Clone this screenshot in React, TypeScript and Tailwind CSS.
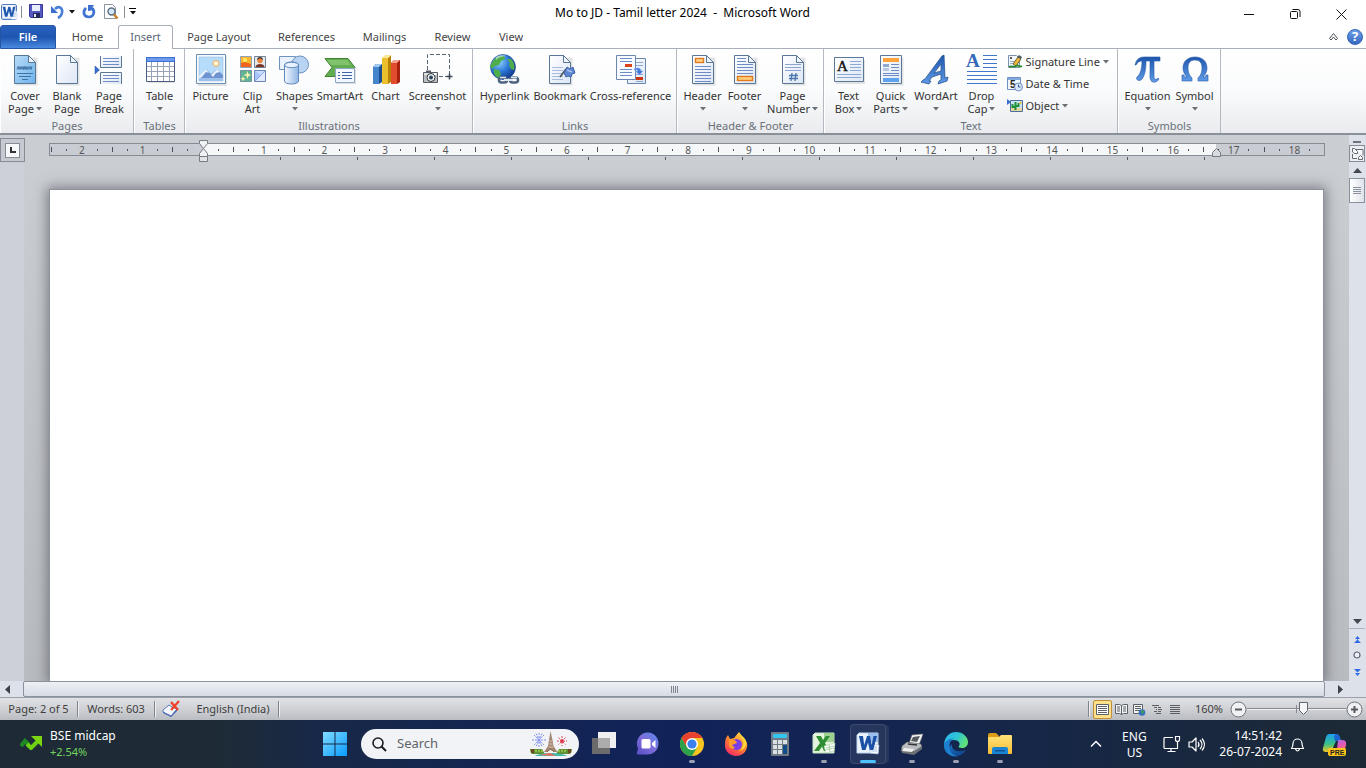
import React from 'react';

type Kids = { children?: React.ReactNode };

function Icon({ children, size = 32 }: Kids & { size?: number }) {
  return (
    <svg width={size} height={size} viewBox={`0 0 ${size} ${size}`} className="block shrink-0 overflow-visible" aria-hidden="true">
      {children}
    </svg>
  );
}

function Defs() {
  return (
    <svg width="0" height="0" className="absolute" aria-hidden="true">
      <defs>
        <linearGradient id="paper" x1="0" y1="0" x2="1" y2="1">
          <stop offset="0" stopColor="#ffffff" />
          <stop offset="1" stopColor="#dce6f5" />
        </linearGradient>
        <linearGradient id="cover" x1="0" y1="0" x2="1" y2="1">
          <stop offset="0" stopColor="#b9dcf7" />
          <stop offset="1" stopColor="#6db3ec" />
        </linearGradient>
        <linearGradient id="blueGlyph" x1="0" y1="0" x2="0" y2="1">
          <stop offset="0" stopColor="#1d55ae" />
          <stop offset="1" stopColor="#5f9be6" />
        </linearGradient>
        <linearGradient id="shape" x1="0" y1="0" x2="1" y2="0">
          <stop offset="0" stopColor="#f4f9ff" />
          <stop offset="1" stopColor="#8fb5e6" />
        </linearGradient>
        <radialGradient id="globe" cx="0.35" cy="0.3" r="0.8">
          <stop offset="0" stopColor="#8fd0ff" />
          <stop offset="0.5" stopColor="#2b77d6" />
          <stop offset="1" stopColor="#0c2f80" />
        </radialGradient>
        <linearGradient id="winlogo" x1="0" y1="0" x2="1" y2="1">
          <stop offset="0" stopColor="#82dcff" />
          <stop offset="1" stopColor="#079bff" />
        </linearGradient>
        <linearGradient id="chat" x1="0" y1="1" x2="1" y2="0">
          <stop offset="0" stopColor="#5a4fc9" />
          <stop offset="0.5" stopColor="#7d6bd8" />
          <stop offset="1" stopColor="#5a8df0" />
        </linearGradient>
        <linearGradient id="edge" x1="0" y1="0" x2="1" y2="0.4">
          <stop offset="0" stopColor="#2bb5ee" />
          <stop offset="0.55" stopColor="#2dc3d8" />
          <stop offset="1" stopColor="#5fe07a" />
        </linearGradient>
        <linearGradient id="edgeLow" x1="0" y1="0" x2="1" y2="1">
          <stop offset="0" stopColor="#1a6fc0" />
          <stop offset="1" stopColor="#0d3f86" />
        </linearGradient>
        <linearGradient id="fox" x1="0.8" y1="0" x2="0.2" y2="1">
          <stop offset="0" stopColor="#ffe14a" />
          <stop offset="0.45" stopColor="#ff8a2a" />
          <stop offset="1" stopColor="#f5236a" />
        </linearGradient>
        <linearGradient id="folder" x1="0" y1="0" x2="0" y2="1">
          <stop offset="0" stopColor="#ffe27a" />
          <stop offset="1" stopColor="#f7bd35" />
        </linearGradient>
        <linearGradient id="copA" x1="0" y1="0" x2="0" y2="1">
          <stop offset="0" stopColor="#1aa0f0" />
          <stop offset="0.55" stopColor="#39c08a" />
          <stop offset="1" stopColor="#f0c61e" />
        </linearGradient>
        <linearGradient id="copB" x1="0" y1="0" x2="0.4" y2="1">
          <stop offset="0" stopColor="#9a6cf0" />
          <stop offset="0.6" stopColor="#e858b0" />
          <stop offset="1" stopColor="#ff8a5c" />
        </linearGradient>
      </defs>
    </svg>
  );
}

function Lines({ x, w, ys, c = '#6f8cc4' }: { x: number; w: number; ys: number[]; c?: string }) {
  return (
    <>
      {ys.map((y) => (
        <rect key={y} x={x} y={y} width={w} height="1" fill={c} />
      ))}
    </>
  );
}

function Sheet({ children, fill = 'url(#paper)', fold = true }: Kids & { fill?: string; fold?: boolean }) {
  return (
    <Icon>
      <path d="M6.5 3.5h22v28h-22z" fill="#000" opacity=".1" />
      {fold ? (
        <>
          <path d="M5.5 1.5h14l7 7v21h-21z" fill={fill} stroke="#5b7796" />
          <path d="M19.5 1.5v7h7z" fill="#edf4fc" stroke="#5b7796" />
        </>
      ) : (
        <path d="M5.5 1.5h21v28h-21z" fill={fill} stroke="#5b7796" />
      )}
      {children}
    </Icon>
  );
}

const CoverIcon = () => (
  <Sheet fill="url(#cover)">
    <path d="M8 15.500l1-3 1 3 1-3 1 3 1-3 1 3 1-3v3l1-3 1 3 1-3v3l2-3v3l2-3v3l1-3" fill="none" stroke="#3a6c9f" strokeWidth=".9" />
    <Lines x={8} w={16} ys={[19]} c="#3f74a8" />
    <Lines x={10} w={12} ys={[22]} c="#3f74a8" />
    <Lines x={13} w={6} ys={[25]} c="#3f74a8" />
  </Sheet>
);
const BlankIcon = () => <Sheet />;
const BreakIcon = () => (
  <Icon>
    <path d="M7.500 2v11.500h21V2" fill="url(#paper)" stroke="#5b7796" />
    <path d="M28.500 30V18.500h-21V30" fill="url(#paper)" stroke="#5b7796" />
    <Lines x={10} w={16} ys={[4, 7, 10, 21, 24, 27]} />
    <path d="M2 12v8l4.500-4z" fill="#3a6fd0" stroke="#24509f" strokeWidth=".5" />
  </Icon>
);
const TableIcon = () => (
  <Icon>
    <path d="M4 5h27v24H4z" fill="#000" opacity=".1" />
    <path d="M2.500 3.500h28v24h-28z" fill="#fff" stroke="#4c5f80" />
    <path d="M2 3h29v5H2z" fill="#3f6fd0" />
    <path d="M3 4h27v3H3z" fill="#6d9bee" />
    <path d="M7.500 8v19M13.500 8v19M19.500 8v19M25.500 8v19M3 12.500h27M3 17.500h27M3 22.500h27" stroke="#98a3b5" />
  </Icon>
);
const PictureIcon = () => (
  <Icon>
    <path d="M3 2h29v30H3z" fill="#000" opacity=".1" />
    <path d="M1.500.500h29v29h-29z" fill="#f7fbff" stroke="#6c8fb2" />
    <path d="M4 3h24v24H4z" fill="#b5dcfa" stroke="#9cc0e0" strokeWidth=".6" />
    <circle cx="21" cy="9.500" r="3" fill="#fff4d0" stroke="#f0a860" />
    <path d="M4 25v-2l7-8 5 5 6-5 6 6v4z" fill="#6f93d0" />
    <path d="M4 25v-3l7-7 3 4-3-1-4 5zM16 21l6-6 3 3-4 1-3 4z" fill="#e6f0fb" />
    <path d="M4 24h24v3H4z" fill="#9cc2ec" />
  </Icon>
);
const ClipIcon = () => (
  <Icon>
    <path d="M3.500 2.500h11v11h-11z" fill="#ffb52e" stroke="#8fa3b8" />
    <path d="M4 9l4-1 6 2v3H4z" fill="#f0641e" />
    <circle cx="8" cy="6" r="2" fill="#fff06a" />
    <path d="M17.500 2.500h11v11h-11z" fill="#e5e9ee" stroke="#6f8296" />
    <circle cx="23" cy="6.500" r="2.700" fill="#e8853a" />
    <path d="M20 6c0-4 6-4 6 0l-3-2z" fill="#3a2620" />
    <path d="M18.500 13c0-4 9-4 9 0z" fill="#7a3428" />
    <path d="M3.500 16.500h11v11h-11z" fill="#5fb493" stroke="#7393a0" />
    <path d="M10.500 17l1 3 3 1-3 1-1 3-1-3-3-1 3-1zM6 22l.7 2 2 .7-2 .7-.7 2-.7-2-2-.7 2-.7z" fill="#fff5b0" />
    <path d="M17.500 16.500h11v11h-11z" fill="#c8dcff" stroke="#6f86b0" />
    <path d="M18 17l7 5-7 5z" fill="#a9c4f8" />
    <path d="M28 17v10l-9-0z" fill="#e0ebff" />
    <path d="M28 17l-7 7-3 3" stroke="#7b9be4" strokeWidth=".8" fill="none" />
  </Icon>
);
const ShapesIcon = () => (
  <Icon>
    <path d="M.500 2.500h16v13h-16z" fill="#eaf3fd" stroke="#6e93be" />
    <circle cx="21" cy="10.500" r="8.500" fill="#b9d4f3" stroke="#6e93be" />
    <path d="M5.500 11c0-4 14-4 14 0v16c0 4-14 4-14 0z" fill="url(#shape)" stroke="#5f88bb" />
    <ellipse cx="12.500" cy="11" rx="7" ry="2.700" fill="#e9f3ff" stroke="#5f88bb" />
  </Icon>
);
const SmartIcon = () => (
  <Icon>
    <path d="M1 4.500h23l7 9-7 9H1l7-9z" fill="#62ad50" stroke="#3f8232" />
    <path d="M3 6h20l4 5H7z" fill="#8fcb78" opacity=".7" />
    <path d="M12 15h20v15H12z" fill="#000" opacity=".12" />
    <path d="M11.500 14.500h19v14h-19z" fill="#f3f8ff" stroke="#8fa6c6" />
    <Lines x={14} w={2} ys={[18, 21, 24]} c="#3f66a6" />
    <Lines x={18} w={10} ys={[18, 21, 24]} c="#3f66a6" />
  </Icon>
);
const ChartIcon = () => (
  <Icon>
    <path d="M3 13l3-3h6v18l-3 2H3z" fill="#1d4f8e" />
    <path d="M3 13h6v17H3z" fill="#4585cc" />
    <path d="M3 13l3-3h6l-3 3z" fill="#9fc8f0" />
    <path d="M21 9l3-3h6v22l-3 2h-6z" fill="#a8200e" />
    <path d="M21 9h6v21h-6z" fill="#e04c2c" />
    <path d="M21 9l3-3h6l-3 3z" fill="#f6a08e" />
    <path d="M18 4l3-3v27l-3 2z" fill="#b98204" />
    <path d="M12 4h6v26h-6z" fill="#ecc02c" />
    <path d="M12 4l3-3h6l-3 3z" fill="#fbe795" />
  </Icon>
);
const ShotIcon = () => (
  <Icon>
    <path d="M5.500 16V.500h22V20M17 22.500h8" fill="none" stroke="#5c6775" strokeDasharray="4 2" />
    <path d="M27.500 19.500v6M24.500 22.500h6" stroke="#3b4654" strokeWidth="1.500" />
    <path d="M1.500 18.500h14v10h-14z" fill="#b9bec3" stroke="#565c62" />
    <path d="M2 19h13v2H2z" fill="#e1e4e7" />
    <path d="M4 16.500h5v2H4z" fill="#565c62" />
    <circle cx="9" cy="23.500" r="4" fill="#f2f5f7" stroke="#333" />
    <circle cx="9" cy="23.500" r="2" fill="#27455e" />
    <rect x="12" y="19" width="2" height="2" fill="#fff" />
  </Icon>
);
const LinkIcon = () => (
  <Icon>
    <circle cx="14" cy="13" r="12.500" fill="url(#globe)" stroke="#17428c" strokeWidth=".6" />
    <path d="M4 7c3-4 7-6 11-5l1 3-4 2-2 4-4 1-3 3-2-3zM18 5h4c3 3 4 7 3 11l-3-1-2-4 1-2zM5 15l5 1 2 4-2 4c-4-1-6-5-5-9z" fill="#4fae4a" />
    <path d="M7 3c4-2 8-2 11-1-4 0-8 1-11 4z" fill="#fff" opacity=".5" />
    <rect x="10" y="23.500" width="8" height="5" rx="2.500" fill="none" stroke="#4f6480" strokeWidth="2.600" />
    <rect x="21" y="23.500" width="8" height="5" rx="2.500" fill="none" stroke="#4f6480" strokeWidth="2.600" />
    <path d="M15 26h9" stroke="#dce7f2" strokeWidth="2" />
    <path d="M11 23.500h6M22 23.500h6" stroke="#d5e2ee" strokeWidth="1.300" />
  </Icon>
);
const BookmarkIcon = () => (
  <Sheet>
    <Lines x={8} w={11} ys={[13, 16, 19, 22, 25]} c="#a8bcdc" />
    <path d="M16 23l6-8" stroke="#4a4f5c" strokeWidth="1.500" />
    <path d="M23 13l3 2 3-2 2 6-3 1-1 3-3-1-2 1-2-4z" fill="#5f86d0" stroke="#3d62a8" />
    <path d="M23 16l5 2" stroke="#a9c2f0" strokeWidth="1.500" />
  </Sheet>
);
const CrossIcon = () => (
  <Icon>
    <path d="M12.500 4.500h18v25h-18z" fill="url(#paper)" stroke="#6b87b0" />
    <rect x="21" y="23" width="7" height="3" fill="#cc3514" />
    <Lines x={21} w={7} ys={[8, 11, 20, 27]} c="#8ca7d4" />
    <path d="M1.500 1.500h19v24h-19z" fill="#f7faff" stroke="#6b87b0" />
    <Lines x={5} w={12} ys={[4, 7, 15, 18, 21]} />
    <rect x="10" y="10" width="7" height="3" fill="#dc4217" />
    <path d="M19 15c4-2 7-1 7 2h2l-3.500 4-4-4H23c-1-2-2-1-4-1z" fill="#4377d8" stroke="#8bb0f4" strokeWidth=".6" />
  </Icon>
);
const HeaderIcon = () => (
  <Sheet>
    <rect x="8.500" y="4.500" width="8" height="4" fill="#ffd58a" stroke="#e07a1c" strokeWidth="1.400" />
    <Lines x={8} w={16} ys={[12, 15, 18, 21, 24, 27]} />
  </Sheet>
);
const FooterIcon = () => (
  <Sheet>
    <Lines x={8} w={9} ys={[4, 7]} />
    <Lines x={8} w={16} ys={[10, 13, 16, 19]} />
    <rect x="8.500" y="22.500" width="15" height="4" fill="#ffcf80" stroke="#e07a1c" strokeWidth="1.400" />
  </Sheet>
);
const NumberIcon = () => (
  <Sheet>
    <Lines x={8} w={16} ys={[10, 13, 16]} c="#8ba4d2" />
    <path d="M15 19l-1 8M19 19l-1 8M12 21.500h9M12 24.500h9" stroke="#4d75ad" strokeWidth="1.300" />
  </Sheet>
);
const TextBoxIcon = () => (
  <Icon>
    <path d="M3 6h29v24H3z" fill="#000" opacity=".1" />
    <path d="M1.500 3.500h29v24h-29z" fill="url(#paper)" stroke="#5b7796" />
    <text x="4" y="17" fontFamily="Liberation Serif, serif" fontSize="15" fill="#111" stroke="#111" strokeWidth=".4">A</text>
    <Lines x={17} w={11} ys={[7, 10, 13, 16]} c="#8ea8d6" />
    <Lines x={4} w={24} ys={[20, 23]} c="#8ea8d6" />
  </Icon>
);
const QuickIcon = () => (
  <Sheet fold={false}>
    <rect x="8" y="4" width="16" height="4" fill="#ffa43a" />
    <rect x="8" y="10" width="6" height="3" fill="#8fa9d0" />
    <rect x="8" y="14" width="6" height="3" fill="#b9c9e4" />
    <Lines x={16} w={8} ys={[10, 13, 16]} />
    <Lines x={8} w={16} ys={[19, 21]} />
    <rect x="8" y="24" width="16" height="4" fill="#5fa3ee" />
  </Sheet>
);
const WordArtIcon = () => (
  <Icon>
    <path d="M24 1l1 23 3-1-1 4-9 3 1-3 2-1v-6l-9 3-3 4 2 0-2 3-8-2 2-2 2-1L22 2zM21 10l-7 9 7-2z" fillRule="evenodd" fill="url(#blueGlyph)" stroke="#2a568f" strokeWidth=".8" strokeLinejoin="round" />
  </Icon>
);
const DropCapIcon = () => (
  <Icon>
    <text x="0" y="13" fontFamily="Liberation Serif, serif" fontWeight="bold" fontSize="19" fill="#336ab8">A</text>
    <Lines x={17} w={14} ys={[1, 5, 9, 13]} c="#3f78cc" />
    <Lines x={1} w={30} ys={[17, 21, 25, 29]} c="#3f78cc" />
  </Icon>
);
const PiIcon = () => (
  <Icon>
    <path d="M3 11C4 6 7 3 12 3h16v4h-6v15c0 4 2 4 4 2l1 1c-3 5-9 4-9-2V7h-4c0 8-1 14-4 18-2 3-7 1-5-2 3-2 5-8 5-16-3 0-4 1-6 4z" fill="url(#blueGlyph)" stroke="#2a5ca8" strokeWidth=".6" />
  </Icon>
);
const OmegaIcon = () => (
  <Icon>
    <path d="M3 27v-6h2c0 2 1 2 3 2C5 20 4 17 4 14 4 7 9 3 16 3s12 4 12 11c0 3-1 6-4 9 2 0 3 0 3-2h2v6H19v-3c3-3 4-6 4-10 0-5-2-8-7-8s-7 3-7 8c0 4 1 7 4 10v3z" fill="url(#blueGlyph)" stroke="#2a5ca8" strokeWidth=".6" />
  </Icon>
);

const SignIcon = () => (
  <Icon size={16}>
    <path d="M1.500 1.500h8l3 3v9h-11z" fill="#f2f6fc" stroke="#7d92ad" />
    <path d="M3 5l2-2M3 3l2 2" stroke="#333" strokeWidth=".8" />
    <Lines x={3} w={6} ys={[7, 9]} c="#9fb3cf" />
    <path d="M6 10l5-7 3 2-5 7z" fill="#e9b63e" stroke="#5c4a1c" strokeWidth=".8" />
    <path d="M10 3l2-2 3 2-1 2z" fill="#555b66" />
    <path d="M2 13c3-2 4 1 7-1s3 2 6 0" fill="none" stroke="#2a8a30" strokeWidth="1.800" />
  </Icon>
);
const DateIcon = () => (
  <Icon size={16}>
    <path d="M.500 1.500h13v12H.500z" fill="#f1f6ff" stroke="#6f8fc2" />
    <path d="M1 2h12v2H1z" fill="#84abdf" />
    <text x="3" y="12" fontFamily="Liberation Sans, sans-serif" fontWeight="bold" fontSize="10" fill="#222">5</text>
    <circle cx="11.500" cy="11" r="4" fill="#d9e8fb" stroke="#6f8fc2" />
    <path d="M11.500 8.500V11h2" fill="none" stroke="#37578c" />
  </Icon>
);
const ObjectIcon = () => (
  <Icon size={16}>
    <path d="M3.500 2.500h12v11h-12z" fill="#c9e4f7" stroke="#4b6f9a" />
    <path d="M4 10h11v3H4z" fill="#e5d59b" />
    <path d="M8.500 12V4M5.500 6v3h3M11.500 5v3h-3" fill="none" stroke="#1e9038" strokeWidth="2" />
    <circle cx="13.500" cy="5" r="1.200" fill="#f0bb44" />
    <path d="M0 1v6l4-3z" fill="#3a6fd0" />
  </Icon>
);

function Caret({ dark = false }: { dark?: boolean }) {
  return (
    <svg width="6" height="4" viewBox="0 0 6 4" className="inline-block shrink-0" aria-hidden="true">
      <path d="M0 0h6L3 3.500z" fill={dark ? '#111' : '#6b6f76'} />
    </svg>
  );
}

type Cmd = { a: string; b?: string; caret?: boolean; icon: React.ReactNode; w: string };

function BigButton({ a, b, caret, icon, w }: Cmd) {
  return (
    <button type="button" className={`flex shrink-0 flex-col items-center whitespace-nowrap rounded-sm hover:bg-[#fdeeb3] ${w}`}>
      {icon}
      <span className="mt-[3px] block leading-[13px]">{a}</span>
      <span className={`flex h-[13px] items-center leading-[13px] ${b ? 'gap-0.5' : ''}`}>
        {b}
        {caret && <Caret />}
      </span>
    </button>
  );
}

function Group({ label, w, children }: Kids & { label: string; w: string }) {
  return (
    <section aria-label={label} className={`flex shrink-0 flex-col border-r border-[#b4b9c1] pt-[5px] shadow-[inset_1px_0_0_#fff] ${w}`}>
      <div className="flex flex-1 justify-center pl-px">{children}</div>
      <h2 className="pb-px pl-px text-center leading-[13px] text-[#6a707a]">{label}</h2>
    </section>
  );
}

const N = 'w-[42px]';
const small = 'flex h-4 items-center gap-[3px] whitespace-nowrap';

function Ribbon() {
  return (
    <div className="flex h-[86px] shrink-0 overflow-hidden border-b-2 border-[#8b9098] bg-linear-to-b from-white via-[#fafbfc] to-[#e9ebee] text-[#333]">
      <Group label="Pages" w="w-[134px]">
        <BigButton w={N} a="Cover" b="Page" caret icon={<CoverIcon />} />
        <BigButton w={N} a="Blank" b="Page" icon={<BlankIcon />} />
        <BigButton w={N} a="Page" b="Break" icon={<BreakIcon />} />
      </Group>
      <Group label="Tables" w="w-[51px]">
        <BigButton w={N} a="Table" caret icon={<TableIcon />} />
      </Group>
      <Group label="Illustrations" w="w-[288px]">
        <BigButton w={N} a="Picture" icon={<PictureIcon />} />
        <BigButton w={N} a="Clip" b="Art" icon={<ClipIcon />} />
        <BigButton w={N} a="Shapes" caret icon={<ShapesIcon />} />
        <BigButton w="w-[49px]" a="SmartArt" icon={<SmartIcon />} />
        <BigButton w={N} a="Chart" icon={<ChartIcon />} />
        <BigButton w="w-[62px]" a="Screenshot" caret icon={<ShotIcon />} />
      </Group>
      <Group label="Links" w="w-[204px]">
        <BigButton w="w-[54px]" a="Hyperlink" icon={<LinkIcon />} />
        <BigButton w="w-[57px]" a="Bookmark" icon={<BookmarkIcon />} />
        <BigButton w="w-[84px]" a="Cross-reference" icon={<CrossIcon />} />
      </Group>
      <Group label="Header &amp; Footer" w="w-[147px]">
        <BigButton w={N} a="Header" caret icon={<HeaderIcon />} />
        <BigButton w={N} a="Footer" caret icon={<FooterIcon />} />
        <BigButton w="w-[54px]" a="Page" b="Number" caret icon={<NumberIcon />} />
      </Group>
      <Group label="Text" w="w-[294px]">
        <BigButton w={N} a="Text" b="Box" caret icon={<TextBoxIcon />} />
        <BigButton w={N} a="Quick" b="Parts" caret icon={<QuickIcon />} />
        <BigButton w="w-[49px]" a="WordArt" caret icon={<WordArtIcon />} />
        <BigButton w={N} a="Drop" b="Cap" caret icon={<DropCapIcon />} />
        <div className="flex w-[112px] flex-col gap-1.5 pl-1">
          <button type="button" className={small}>
            <SignIcon />
            Signature Line <Caret />
          </button>
          <button type="button" className={small}>
            <DateIcon />
            Date &amp; Time
          </button>
          <button type="button" className={small}>
            <ObjectIcon />
            Object <Caret />
          </button>
        </div>
      </Group>
      <Group label="Symbols" w="w-[103px]">
        <BigButton w="w-[50px]" a="Equation" caret icon={<PiIcon />} />
        <BigButton w="w-[44px]" a="Symbol" caret icon={<OmegaIcon />} />
      </Group>
    </div>
  );
}

function WordBadge({ size }: { size: number }) {
  return (
    <svg width={size} height={size} viewBox="0 0 24 24" className="block overflow-visible" aria-hidden="true">
      <rect x="1" y="1" width="22" height="22" rx="1.500" fill="#eaf2fc" stroke="#2f62b0" strokeWidth="1.500" />
      <path d="M2 2h20L2 14z" fill="#fff" />
      <path d="M16 11h8v12h-9z" fill="#fff" stroke="#9db8dd" strokeWidth=".6" />
      <path d="M18 14h5M18 16.500h5M17 19h5" stroke="#8aabdb" />
      <path d="M2.500 4h4l1.700 10L11 4h3l2.300 10L18 4h3.500l-3.800 15h-3.400L12 10.500 9.500 19H6z" fill="#1f58b0" />
    </svg>
  );
}

function TitleBar() {
  return (
    <header className="flex h-[25px] shrink-0 items-center justify-between bg-white">
      <div className="flex w-[138px] items-center pb-0.5 pl-px">
        <WordBadge size={16} />
        <span className="ml-1 h-3 w-px bg-[#8d8d8d]" />
        <button type="button" aria-label="Save" className="ml-[7px]">
          <Icon size={15}>
            <path d="M.500.500h13v13H1.500l-1-1z" fill="#5458c0" stroke="#383a96" />
            <path d="M3 1h8v6H3z" fill="#e9eefb" />
            <path d="M4 9h7v5H4z" fill="#222b5c" />
            <path d="M5 10h2v3H5z" fill="#e8e8f0" />
          </Icon>
        </button>
        <button type="button" aria-label="Undo" className="ml-[7px]">
          <Icon size={14}>
            <path d="M4 4c4-4 8-1 7 4-.5 2-2 4-4 5" fill="none" stroke="#4a7ed6" strokeWidth="2.600" />
            <path d="M0 1v7h7z" fill="#3b6fd0" />
          </Icon>
        </button>
        <button type="button" aria-label="Undo history" className="ml-1 flex">
          <Caret dark />
        </button>
        <button type="button" aria-label="Repeat" className="ml-[7px]">
          <Icon size={14}>
            <path d="M10 3c4 4 1 9-3 9-5 0-7-5-3-9" fill="none" stroke="#3f74d2" strokeWidth="2.600" />
            <path d="M6 0v6l6-1-2-2 2-3z" fill="#3b6fd0" />
          </Icon>
        </button>
        <button type="button" aria-label="Print preview" className="ml-[7px]">
          <Icon size={16}>
            <path d="M1.500.500h8l3 3v11h-11z" fill="#fff" stroke="#8a94a0" />
            <circle cx="8.500" cy="7.500" r="3.500" fill="#d3e6f6" stroke="#5e6f80" strokeWidth="1.400" />
            <path d="M11 10.500l3.500 4" stroke="#c9822b" strokeWidth="2.500" />
          </Icon>
        </button>
        <span className="ml-[5px] h-3 w-px shrink-0 bg-[#8d8d8d]" />
        <button type="button" aria-label="Customize toolbar" className="ml-1 flex flex-col items-center gap-0.5">
          <span className="h-px w-[7px] bg-black" />
          <Caret dark />
        </button>
      </div>
      <h1 className="whitespace-pre text-[12px] text-black">Mo to JD - Tamil letter 2024  -  Microsoft Word</h1>
      <div className="flex w-[139px] pr-px">
        <button type="button" aria-label="Minimize" className="flex h-[25px] flex-1 items-center justify-center pt-1">
          <Icon size={11}><path d="M0 5.500h10" stroke="#111" /></Icon>
        </button>
        <button type="button" aria-label="Restore" className="flex h-[25px] flex-1 items-center justify-center pt-1">
          <Icon size={11}>
            <rect x=".500" y="2.500" width="7" height="7" rx="1" fill="none" stroke="#111" />
            <path d="M2.500.500h5.500q2 0 2 2V8" fill="none" stroke="#111" />
          </Icon>
        </button>
        <button type="button" aria-label="Close" className="flex h-[25px] flex-1 items-center justify-center pt-1">
          <Icon size={11}><path d="M.500.500l10 10M10.500.500l-10 10" stroke="#111" /></Icon>
        </button>
      </div>
    </header>
  );
}

const tabs: [string, string][] = [
  ['Home', 'w-[62px]'],
  ['Insert', 'w-[55px]'],
  ['Page Layout', 'w-[91px]'],
  ['References', 'w-[84px]'],
  ['Mailings', 'w-[72px]'],
  ['Review', 'w-[64px]'],
  ['View', 'w-[53px]'],
];

function TabRow() {
  return (
    <nav aria-label="Ribbon tabs" className="flex h-6 shrink-0 bg-white text-[#444]">
      <button type="button" className="w-14 shrink-0 rounded-t-[3px] border border-[#2456a4] bg-linear-to-b from-[#2b62bd] via-[#1e55b0] to-[#4a8ae0] font-semibold text-white">
        File
      </button>
      {tabs.map(([t, w]) =>
        t === 'Insert' ? (
          <button key={t} type="button" aria-current="page" className={`shrink-0 rounded-t-[3px] border border-b-0 border-[#a9afb8] bg-white text-[#5a6577] ${w}`}>
            {t}
          </button>
        ) : (
          <button key={t} type="button" className={`shrink-0 whitespace-nowrap border-b border-[#a9afb8] pl-px pt-0.5 ${w}`}>
            {t}
          </button>
        ),
      )}
      <div className="flex flex-1 items-center justify-end gap-2 border-b border-[#a9afb8] pr-[3px]">
        <button type="button" aria-label="Minimize the ribbon">
          <Icon size={11}>
            <path d="M1.500 7.500l4-5 4 5-1.500 1.500-2.500-3L3 9z" fill="none" stroke="#4a4f57" />
          </Icon>
        </button>
        <button type="button" aria-label="Help" className="flex size-4 items-center justify-center rounded-full border border-[#2f62b4] bg-linear-to-b from-[#6fa0e8] to-[#3568c2] text-[13px] font-bold leading-none text-white">
          ?
        </button>
      </div>
    </nav>
  );
}

function Ruler() {
  const slots = Array.from({ length: 84 }, (_, i) => i);
  return (
    <div className="flex h-7 shrink-0 pr-6">
      <div className="w-[49px] shrink-0 pt-[3px]">
        <button type="button" aria-label="Tab selector" className="flex h-6 w-[25px] items-center justify-center border border-[#868c95] bg-[#c6cad0]">
          <span className="flex size-[15px] items-center justify-center border border-[#868c95] bg-[#f7f8fa]">
            <span className="size-[6px] border-b-2 border-l-2 border-[#333]" />
          </span>
        </button>
      </div>
      <div className="relative min-w-0 flex-1 pt-2">
        <div className="relative h-[13px] overflow-hidden border border-[#868c95] bg-[#c9cdd3]">
          <div className="absolute inset-y-0 left-[153px] right-[108px] bg-[#f6f7f9]" />
          <div className="relative -ml-1.5 mr-[7px] flex h-full items-center text-[10px] leading-none text-[#555]">
            {slots.map((i) => (
              <span key={i} className="flex flex-1 basis-0 items-center justify-center">
                {i === 10 ? null : i % 4 === 2 ? (
                  <span className="w-0 overflow-visible">
                    <span className="flex w-4 -translate-x-1/2 justify-center">{Math.abs((i - 10) / 4)}</span>
                  </span>
                ) : i % 4 === 0 ? (
                  <span className="h-[5px] w-px bg-[#4d525a]" />
                ) : (
                  <span className="h-0.5 w-px bg-[#4d525a]" />
                )}
              </span>
            ))}
          </div>
        </div>
        <div className="ml-[231px] mr-[120px] flex justify-between pt-px">
          {Array.from({ length: 13 }, (_, i) => (
            <span key={i} className="h-[3px] w-px bg-[#555b64]" />
          ))}
        </div>
        <svg width="10" height="23" viewBox="0 0 10 23" className="absolute left-[150px] top-[5px]" aria-hidden="true">
          <path d="M.500.500h8v3l-4 5-4-5zM.500 16.500v-3l4-5 4 5v3z" fill="#f1f2f4" stroke="#777c84" />
          <path d="M.500 16.500h8v5h-8z" fill="#e1e3e6" stroke="#777c84" />
        </svg>
        <svg width="10" height="9" viewBox="0 0 10 9" className="absolute right-[103px] top-[13px]" aria-hidden="true">
          <path d="M.500 8.500v-4l4-4 4 4v4z" fill="#d9dbdf" stroke="#777c84" />
        </svg>
      </div>
    </div>
  );
}

function VScroll() {
  return (
    <div className="flex w-[17px] shrink-0 flex-col items-center bg-[#dde1e9] pr-px">
      <span className="mt-1.5 h-0.5 w-2 shrink-0 bg-[#70757d]" />
      <button type="button" aria-label="View ruler" className="mt-0.5 flex h-[17px] w-full shrink-0 items-center justify-center border border-[#868c95] bg-[#eceef2]">
        <Icon size={13}>
          <path d="M1.500 5V1.500h2l3 3v2h-3zM11.500 12.500h-4v-2l2-2 2 2zM5 2.500h7v6M1.500 7v4.500H6" fill="#fbfbfb" stroke="#656b74" />
        </Icon>
      </button>
      <button type="button" aria-label="Scroll up" className="flex h-4 shrink-0 items-center">
        <Icon size={9}><path d="M0 7h9L4.500 2z" fill="#43474e" /></Icon>
      </button>
      <div className="flex h-[25px] w-full shrink-0 flex-col items-center justify-center gap-px border border-[#8a929e] bg-linear-to-r from-white to-[#dfe3ea]">
        <span className="h-px w-2 bg-[#8a929e]" />
        <span className="h-px w-2 bg-[#8a929e]" />
        <span className="h-px w-2 bg-[#8a929e]" />
        <span className="h-px w-2 bg-[#8a929e]" />
      </div>
      <div className="flex-1" />
      <button type="button" aria-label="Scroll down" className="flex h-4 w-full items-center justify-center border-b border-[#aeb4be]">
        <Icon size={9}><path d="M0 3h9L4.500 8z" fill="#43474e" /></Icon>
      </button>
      <button type="button" aria-label="Previous page" className="flex h-[17px] items-center pt-1">
        <Icon size={7}><path d="M1 3h5L3.500 0zM3 3h1v1H3zM0 7h7L3.500 3.500z" fill="#2f6be8" /></Icon>
      </button>
      <button type="button" aria-label="Select browse object" className="flex h-[17px] items-center">
        <Icon size={8}><circle cx="4" cy="4" r="3" fill="#eef" stroke="#5d636c" strokeWidth="1.200" /></Icon>
      </button>
      <button type="button" aria-label="Next page" className="flex h-[17px] items-center pt-0.5">
        <Icon size={7}><path d="M0 0h7L3.500 3.500zM1 4h5L3.500 7z" fill="#2f6be8" /></Icon>
      </button>
      <div className="h-[17px]" />
    </div>
  );
}

function HScroll() {
  return (
    <div className="flex h-4 shrink-0 bg-[#dde1e9]">
      <button type="button" aria-label="Scroll left" className="flex w-[23px] items-center pl-[5px]">
        <Icon size={9}><path d="M5 0v9L0 4.500z" fill="#3c4047" /></Icon>
      </button>
      <div className="flex flex-1 items-center justify-center gap-px rounded-xs border border-[#8a929e] bg-linear-to-b from-[#eef1f6] to-[#d7dce4]">
        <span className="h-[7px] w-px bg-[#7e8691]" />
        <span className="h-[7px] w-px bg-[#7e8691]" />
        <span className="h-[7px] w-px bg-[#7e8691]" />
        <span className="h-[7px] w-px bg-[#7e8691]" />
      </div>
      <button type="button" aria-label="Scroll right" className="flex w-6 items-center justify-center pl-2.5">
        <Icon size={9}><path d="M0 0v9l5-4.500z" fill="#3c4047" /></Icon>
      </button>
    </div>
  );
}

function StatusBar() {
  const sep = 'h-4 w-px bg-[#80858d] shadow-[1px_0_0_#eceef0]';
  const view = 'flex h-[19px] w-[18px] items-center justify-center';
  return (
    <footer className="flex h-[23px] shrink-0 items-center border-t border-[#9a9fa8] bg-linear-to-b from-[#dfe1e5] via-[#cfd1d5] to-[#b9bcc1] text-[#3e3e3e]">
      <button type="button" className="w-[77px] text-center">Page: 2 of 5</button>
      <span className={sep} />
      <button type="button" className="w-[76px] text-center">Words: 603</button>
      <span className={sep} />
      <button type="button" aria-label="Proofing errors" className="ml-2">
        <Icon size={17}>
          <path d="M0 9l6-5 3 2 5 2-6 7-8-4z" fill="#f4f7fd" stroke="#5877bb" />
          <path d="M0 11l8 4 6-7v2l-6 6-8-4z" fill="#3e62b5" />
          <path d="M8 1l7 8M16 0L8 9" stroke="#ee4028" strokeWidth="2.200" />
        </Icon>
      </button>
      <button type="button" className="w-[98px] pl-2 text-center">English (India)</button>
      <span className={sep} />
      <div className="flex-1" />
      <span className={sep} />
      <div className="ml-1 flex items-center">
        <button type="button" aria-label="Print Layout" aria-pressed="true" className="flex h-[19px] w-[19px] items-center justify-center rounded-xs border border-[#c08f3a] bg-[#fce08a]">
          <Icon size={13}>
            <path d="M.500 1.500h12v10H.500z" fill="#fff" stroke="#5b5f66" />
            <Lines x={2} w={9} ys={[3, 5, 7, 9]} c="#5b5f66" />
          </Icon>
        </button>
        <button type="button" aria-label="Full Screen Reading" className={view}>
          <Icon size={13}>
            <path d="M.500 1.500h4l2 1 2-1h4v9h-4l-2 1-2-1h-4zM6.500 2.500v9" fill="#f3f4f5" stroke="#5b5f66" />
            <path d="M2 4h3M2 6h3M2 8h3M8 4h3M8 6h3M8 8h3" stroke="#5b5f66" />
          </Icon>
        </button>
        <button type="button" aria-label="Web Layout" className={view}>
          <Icon size={13}>
            <path d="M.500 1.500h9v9H.500z" fill="#f3f4f5" stroke="#5b5f66" />
            <Lines x={2} w={6} ys={[3, 5, 7]} c="#5b5f66" />
            <circle cx="9" cy="9.500" r="3.300" fill="#3472bd" />
            <path d="M8 8l2-1 1 2-2 2z" fill="#48a548" />
          </Icon>
        </button>
        <button type="button" aria-label="Outline" className={view}>
          <Icon size={13}>
            <path d="M1 2.500h7M3 4.500h3M7 4.500h3M5 6.500h1M7 6.500h4M3 8.500h3M7 8.500h3M5 10.500h5" stroke="#5b5f66" />
          </Icon>
        </button>
        <button type="button" aria-label="Draft" className={view}>
          <Icon size={13}>
            <Lines x={1} w={10} ys={[2, 4, 6, 8, 10]} c="#5b5f66" />
          </Icon>
        </button>
      </div>
      <button type="button" className="w-[46px] pl-1 text-center">160%</button>
      <button type="button" aria-label="Zoom out" className="flex">
        <Icon size={17}>
          <circle cx="8.500" cy="8.500" r="7.500" fill="#f0f1f3" stroke="#6b7078" />
          <path d="M5 8.500h7" stroke="#555a61" strokeWidth="2" />
        </Icon>
      </button>
      <div className="relative flex h-4 w-[99px] items-center">
        <svg width="99" height="16" viewBox="0 0 99 16" aria-hidden="true">
          <path d="M0 8.500h99" stroke="#fff" opacity=".7" />
          <path d="M0 7.500h99M49.500 4v8" stroke="#858a93" />
          <path d="M52.500 1.500h8v8l-4 4-4-4z" fill="#f5f6f7" stroke="#61666f" />
        </svg>
        <input type="range" aria-label="Zoom level" min="10" max="500" defaultValue="160" className="absolute inset-0 w-full opacity-0" />
      </div>
      <button type="button" aria-label="Zoom in" className="mr-[3px] flex">
        <Icon size={17}>
          <circle cx="8.500" cy="8.500" r="7.500" fill="#f0f1f3" stroke="#6b7078" />
          <path d="M5 8.500h7M8.500 5v7" stroke="#555a61" strokeWidth="2" />
        </Icon>
      </button>
    </footer>
  );
}

function TaskButton({ label, state, children }: Kids & { label: string; state?: 'open' | 'active' }) {
  return (
    <button type="button" aria-label={label} className="flex h-full w-11 shrink-0 flex-col items-center px-1">
      <span className={`mt-1 flex h-10 w-full flex-col items-center ${state === 'active' ? 'rounded-sm bg-white/8 shadow-[4px_0_0_-1px_rgba(255,255,255,0.08)] ring-1 ring-inset ring-white/10' : ''}`}>
        <span className="mt-2">{children}</span>
        {state && (
          <span className={`mt-1 h-[3px] rounded-full ${state === 'active' ? 'w-4 bg-[#4cc2ff]' : 'w-1.5 bg-[#9aa0b4]'}`} />
        )}
      </span>
    </button>
  );
}

function SearchArt() {
  return (
    <svg width="42" height="26" viewBox="0 0 42 26" aria-hidden="true">
      <g stroke="#6b79ea" strokeWidth=".8" strokeDasharray="2 1">
        <path d="M9 2v14M2 9h14M4 4l10 10M14 4L4 14M6 2.500l6 13M12 2.500l-6 13" />
      </g>
      <circle cx="9" cy="9" r="1.500" fill="#8795f4" />
      <g stroke="#e0384c" strokeWidth=".9" strokeDasharray="2 1">
        <path d="M32 5v10M27 10h10M28.500 6.500l7 7M35.500 6.500l-7 7" />
      </g>
      <circle cx="32" cy="10" r="1.800" fill="#e0384c" />
      <path d="M0 18h12l3 5H2q-2-2-2-5zM42 18H29l-3 5h14q2-2 2-5z" fill="#5c8c34" />
      <path d="M1 18h3v4H1zM38 18h3v4h-3z" fill="#6f4a1f" />
      <path d="M5 20h8M28 20h8" stroke="#8fbf45" strokeWidth="2.500" strokeDasharray="2 1" />
      <path d="M20.500 0l2 9 1 6 4 6H14l4-6 1-6z" fill="#a38772" />
      <path d="M17 21q3.500-5 7 0" fill="#f1ece6" stroke="#7b604e" />
      <path d="M18.500 16h5M19.500 10h2.500M19 13h3.500" stroke="#d8c5b4" />
      <path d="M5 25c5-4 26-4 32 0z" fill="#46b7ad" />
      <path d="M9 24l11-2 6 3z" fill="#ee6f56" />
    </svg>
  );
}

function Taskbar() {
  return (
    <div className="flex h-12 shrink-0 items-stretch bg-linear-to-r from-[#1e2b38] via-[#11225a] via-50% to-[#1c2935] text-white">
      <div className="flex w-[313px] shrink-0 bg-linear-to-r from-[#1e2b37] from-70% to-transparent">
        <button type="button" className="flex items-start gap-2 pl-5 pt-2 text-left text-[12px] leading-4">
          <svg width="22" height="14" viewBox="0 0 22 14" className="mt-2 block" aria-hidden="true">
            <path d="M1 10l4-5 4 4" fill="none" stroke="#1f8a23" strokeWidth="4" />
            <path d="M7 8l4 4 7-7" fill="none" stroke="#6fcf12" strokeWidth="4" />
            <path d="M11 0h11v11z" fill="#7bd60f" />
          </svg>
          <span>
            <span className="block">BSE midcap</span>
            <span className="block text-[11px] text-[#72d35c]">+2.54%</span>
          </span>
        </button>
      </div>
      <div className="flex shrink-0 items-stretch">
        <TaskButton label="Start">
          <Icon size={24}>
            <path d="M0 0h11.500v11.500H0zM12.500 0H24v11.500H12.500zM0 12.500h11.500V24H0zM12.500 12.500H24V24H12.500z" fill="url(#winlogo)" />
          </Icon>
        </TaskButton>
        <label className="ml-1 mr-[3px] mt-[9px] flex h-[30px] w-[218px] items-center rounded-full bg-[#f1f3f6] pl-[11px] pr-[7px]">
          <Icon size={15}>
            <circle cx="6" cy="6" r="5" fill="none" stroke="#1e1e22" strokeWidth="1.600" />
            <path d="M9.500 9.500l4.500 4.500" stroke="#1e1e22" strokeWidth="2" />
          </Icon>
          <input type="text" aria-label="Search" placeholder="Search" className="ml-2.5 w-0 flex-1 bg-transparent text-[13px] text-[#333] outline-none placeholder:text-[#606268]" />
          <SearchArt />
        </label>
        <TaskButton label="Task View">
          <Icon size={24}>
            <path d="M6 0h18v16H6z" fill="#f0f0f0" />
            <path d="M0 6h18v16H0z" fill="#6b6b6b" />
            <path d="M6 6h12v10H6z" fill="#acacac" />
          </Icon>
        </TaskButton>
        <TaskButton label="Chat">
          <Icon size={24}>
            <path d="M12 .500a11 11 0 1 1-1 22H2q-2 0-1-2l1-4A11 11 0 0 1 12 .500z" fill="url(#chat)" />
            <rect x="5.500" y="7" width="9" height="9.500" rx="1.500" fill="#fff" />
            <path d="M16 11l3.500-3v8L16 13z" fill="#fff" />
          </Icon>
        </TaskButton>
        <TaskButton label="Chrome" state="open">
          <Icon size={24}>
            <circle cx="12" cy="12" r="12" fill="#f8c520" />
            <path d="M1.600 6A12 12 0 0 0 12 24l5.200-9L7 15z" fill="#2ba14b" />
            <path d="M1.600 6A12 12 0 0 1 22.400 6H12l-5.200 9z" fill="#e8412f" />
            <circle cx="12" cy="12" r="6" fill="#fff" />
            <circle cx="12" cy="12" r="4.600" fill="#3b80ec" />
          </Icon>
        </TaskButton>
        <TaskButton label="Firefox">
          <Icon size={24}>
            <path d="M2 6l2-3 2 4 4-1 5-6 3 5c4 3 6 6 5 10-1 6-6 9-11 9S1 20 1 14c0-3 0-5 1-8z" fill="url(#fox)" />
            <circle cx="12.500" cy="12.500" r="5.500" fill="#7b3fe4" />
            <path d="M5 7c4 0 7 1 8 4l-5 2 3 3c-4 2-7-1-6-5z" fill="#ff9a2e" />
            <path d="M15 0c1 5 6 7 4 13-1 3-2 5-4 6 5-1 8-5 7-10-1-4-5-5-7-9z" fill="#ffd83c" />
          </Icon>
        </TaskButton>
        <TaskButton label="Calculator">
          <Icon size={24}>
            <rect x="3" width="18" height="24" rx="1" fill="#727b84" />
            <path d="M5 2h14v4H5z" fill="#35c6f0" />
            <path d="M5 8h4v4H5zM10 8h4v4h-4zM15 8h4v4h-4zM5 13h4v4H5zM10 13h4v4h-4zM5 18h4v4H5zM10 18h4v4h-4z" fill="#dadfe4" />
            <path d="M15 13h4v9h-4z" fill="#104d88" />
          </Icon>
        </TaskButton>
        <TaskButton label="Excel" state="open">
          <Icon size={24}>
            <path d="M3 1h19v20H1V3z" fill="#e4f4df" stroke="#c9e4c2" />
            <path d="M12 1h10v9H12z" fill="#9ed08f" />
            <path d="M4 4h5l2 4 3-4h4l-5 7 4 8h-5l-2-4.500L7 19H2l6-8z" fill="#2f8e32" />
            <path d="M12 14l11-3-1 8-8 2z" fill="#fff" stroke="#a4cfa0" strokeWidth=".6" />
            <path d="M14 16l8-2M14 18l8-2M17 13l1 7" stroke="#8dbf8a" strokeWidth=".7" />
          </Icon>
        </TaskButton>
        <TaskButton label="Word" state="active">
          <Icon size={24}>
            <path d="M3 1h19v20H1V3z" fill="#eaf2fc" stroke="#c5d8f0" />
            <path d="M12 1h10v9H12z" fill="#9cc0ee" />
            <path d="M13 12l10 1-1 9-8-1z" fill="#fff" stroke="#9db8dd" strokeWidth=".6" />
            <path d="M16 15h5M16 17h5M15 19h6" stroke="#a9c3e6" />
            <path d="M3 4h4l1.200 9L11 4h3l1.700 9L17.500 4H21l-3.800 14h-3.400L12 10.500 9.500 18H6z" fill="#1c4fa6" />
          </Icon>
        </TaskButton>
        <TaskButton label="Printer" state="open">
          <Icon size={24}>
            <path d="M12 3l11-1-4 11-10-1z" fill="#f5f5f5" stroke="#777" strokeWidth=".6" />
            <path d="M13 5l7-1-3 6-6-1z" fill="#555b61" />
            <path d="M2 14l5-4 14 2 1 3-8 6-13-2z" fill="#b9bdc1" stroke="#555" strokeWidth=".6" />
            <path d="M1 17l13 2 8-5v3l-8 6-12-2z" fill="#6c7075" />
            <path d="M4 16l10 1-2 3-10-1z" fill="#efefef" />
            <path d="M8 12l9 1" stroke="#333" strokeWidth="1.500" />
          </Icon>
        </TaskButton>
        <TaskButton label="Edge" state="open">
          <Icon size={24}>
            <path d="M0 12C1 4 6 0 12 0c7 0 12 5 12 10 0 4-3 6-6 6-3 0-4-1-3-2 2-3-1-6-5-6-5 0-8 3-10 4z" fill="url(#edge)" />
            <path d="M0 12c2-4 6-6 10-5-4 1-5 5-4 9 1 5 5 8 9 8C6 26-1 20 0 12z" fill="#1c7fd0" />
            <path d="M8 12c-1 6 5 9 14 6-3 5-8 7-12 5-5-3-5-9-2-11z" fill="url(#edgeLow)" />
          </Icon>
        </TaskButton>
        <TaskButton label="File Explorer" state="open">
          <Icon size={24}>
            <path d="M0 3q0-2 2-2h6l3 3v5H0z" fill="#dd9c16" />
            <path d="M1 5h10l2-2h10q1 0 1 1v17q0 1-1 1H1q-1 0-1-1V6z" fill="url(#folder)" />
            <path d="M4 22v-5q0-2 2-2h12q2 0 2 2v5z" fill="#1b84d4" />
            <path d="M7 18h10v1.500H7z" fill="#0d5596" />
          </Icon>
        </TaskButton>
      </div>
      <div className="flex flex-1 items-center justify-end pr-[19px] text-[12px] leading-4">
        <button type="button" aria-label="Show hidden icons" className="mr-[18px]">
          <Icon size={12}><path d="M1 8.500l5-5 5 5" fill="none" stroke="#fff" strokeWidth="1.500" /></Icon>
        </button>
        <button type="button" className="mr-[15px] w-7 pt-0.5 text-center">
          ENG<br />US
        </button>
        <button type="button" aria-label="Network and volume" className="mr-3.5 flex items-center gap-[7px]">
          <Icon size={18}>
            <path d="M10 2.500H2q-1 0-1 1v9q0 1 1 1h12.500v-5M8 13.500v3M4.500 16.500h8M14.500 8.500v-2M12.500 1.500h4v3q0 2-2 2t-2-2z" fill="none" stroke="#fff" strokeWidth="1.200" />
          </Icon>
          <Icon size={17}>
            <path d="M1 6h3l4-4v13l-4-4H1z" fill="none" stroke="#fff" strokeWidth="1.200" strokeLinejoin="round" />
            <path d="M10 6q2 2.500 0 5M12 4q4 4.500 0 9M14 2.500q5 6 0 12" fill="none" stroke="#fff" strokeWidth="1.200" />
          </Icon>
        </button>
        <button type="button" className="mr-2 text-right">
          14:51:42<br />26-07-2024
        </button>
        <button type="button" aria-label="Notifications" className="mr-[17px]">
          <Icon size={15}>
            <path d="M1.500 11.500q1.500-2 1.500-5a4.500 4.500 0 0 1 9 0q0 3 1.500 5zM5.500 12q2 4 4 0" fill="none" stroke="#fff" strokeWidth="1.200" strokeLinejoin="round" />
          </Icon>
        </button>
        <button type="button" aria-label="Copilot preview">
          <Icon size={25}>
            <path d="M7 2h7q3 0 4 4l1 3h-5l-4 9q-1 2-4 2H4q-4 0-3-4L4 5q1-3 3-3z" fill="url(#copA)" />
            <path d="M14 2q3 0 4 4l1 3h-6l-1-5z" fill="#1b63d2" />
            <path d="M16 8h4q5 0 4 5l-1 4q-1 4-5 4h-7q3 0 4-4z" fill="url(#copB)" />
            <rect x="6" y="16" width="18" height="8" rx="2" fill="#ffc619" />
            <text x="8" y="22.500" fontFamily="Liberation Sans, sans-serif" fontWeight="bold" fontSize="7" fill="#222">PRE</text>
          </Icon>
        </button>
      </div>
    </div>
  );
}

export default function App() {
  return (
    <div className="flex h-screen flex-col overflow-hidden bg-white font-['Noto_Sans','Open_Sans',sans-serif] text-[11px]">
      <Defs />
      <TitleBar />
      <TabRow />
      <Ribbon />
      <div className="flex min-h-0 flex-1">
        <div className="flex min-w-0 flex-1 flex-col bg-[#cacdd2]">
          <Ruler />
          <main className="flex min-h-0 flex-1 overflow-hidden bg-linear-to-b from-[#cacdd2] to-[#b8bbc0]">
            <div className="w-6 shrink-0 bg-[#cdd0d6]" />
            <article aria-label="Document page" className="ml-[26px] mr-[26px] mt-[27px] flex-1 bg-white shadow-[0_0_12px_3px_rgba(70,74,82,0.6)] ring-1 ring-[#8e939b]" />
          </main>
          <HScroll />
        </div>
        <VScroll />
      </div>
      <StatusBar />
      <Taskbar />
    </div>
  );
}
